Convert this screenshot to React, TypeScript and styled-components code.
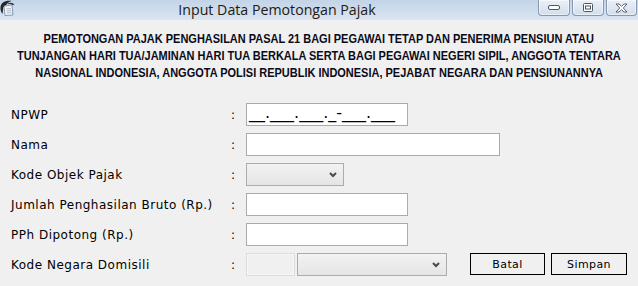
import React from 'react';
import styled, { createGlobalStyle } from 'styled-components';

const GlobalStyle = createGlobalStyle`
  html, body {
    margin: 0;
    padding: 0;
    background: #f0f0f0;
  }
  body {
    width: 638px;
    height: 286px;
    overflow: hidden;
  }
`;

const Window = styled.div`
  width: 638px;
  height: 286px;
  display: flex;
  flex-direction: column;
  background: #f0f0f0;
  font-family: 'DejaVu Sans', Verdana, sans-serif;
`;

const TitleBar = styled.div`
  height: 20px;
  display: flex;
  align-items: flex-start;
  background: linear-gradient(#c3d4e7, #dae5f2);
`;

const AppIcon = styled.div`
  width: 16px;
  height: 16px;
  flex: none;
`;

const Title = styled.div`
  flex: 1;
  text-align: center;
  font-family: 'Open Sans', 'Noto Sans', sans-serif;
  font-size: 14.2px;
  line-height: 19px;
  color: #1e1a12;
`;

const CaptionButtons = styled.div`
  display: flex;
  gap: 2px;
  padding-right: 1px;
`;

const CaptionButton = styled.div<{ $w: number }>`
  width: ${({ $w }) => $w}px;
  height: 16px;
  box-sizing: border-box;
  border: 1px solid #8798b0;
  border-top: none;
  border-radius: 0 0 4px 4px;
  background: linear-gradient(#eaf0f7, #d2deec);
  box-shadow: inset 0 0 0 1px rgba(255, 255, 255, 0.5);
  display: flex;
  align-items: center;
  justify-content: center;
`;

const Content = styled.div`
  flex: 1;
  display: flex;
  flex-direction: column;
  padding-top: 11px;
`;

const Heading = styled.div`
  display: flex;
  flex-direction: column;
  align-items: center;
  font-family: 'Liberation Sans', Arial, sans-serif;
  font-weight: bold;
  font-size: 12px;
  line-height: 17px;
  color: #0b0b18;
`;

const HeadingLine = styled.div`
  white-space: nowrap;
  transform: scaleX(0.915);
  transform-origin: center;
`;

const Form = styled.div`
  margin-top: 21px;
  padding-left: 11px;
  display: grid;
  grid-template-columns: 219px 16px auto;
  grid-auto-rows: 23px;
  row-gap: 7px;
  align-items: center;
  font-size: 12px;
  letter-spacing: 0.5px;
  color: #000;
`;

const Label = styled.div`
  white-space: nowrap;
`;

const Colon = styled.div`
  padding-left: 1px;
`;

const Field = styled.div`
  display: flex;
  align-items: flex-start;
  height: 23px;
  letter-spacing: 0;
`;

const TextBox = styled.div<{ $w: number; $disabled?: boolean }>`
  width: ${({ $w }) => $w}px;
  height: 23px;
  box-sizing: border-box;
  border: 1px solid ${({ $disabled }) => ($disabled ? '#dcdcdc' : '#ababab')};
  background: ${({ $disabled }) => ($disabled ? '#f0f0f0' : '#fff')};
  box-shadow: ${({ $disabled }) => ($disabled ? 'inset 0 0 0 1px #f7f7f7' : 'none')};
  overflow: hidden;
`;

const Mask = styled.div`
  font-size: 16px;
  line-height: 16px;
  padding: 1px 0 0 2px;
  white-space: nowrap;
  color: #000;
`;

const Select = styled.div<{ $w: number }>`
  width: ${({ $w }) => $w}px;
  height: 23px;
  box-sizing: border-box;
  border: 1px solid #acacac;
  background: linear-gradient(#f2f2f2, #e5e5e5);
  display: flex;
  align-items: center;
  justify-content: flex-end;
  padding-right: 6px;
`;

const Spacer = styled.div<{ $w: number }>`
  width: ${({ $w }) => $w}px;
  flex: none;
`;

const Button = styled.div<{ $w: number }>`
  width: ${({ $w }) => $w}px;
  height: 22px;
  box-sizing: border-box;
  border: 1px solid #000;
  background: #f0f0f0;
  display: flex;
  align-items: center;
  justify-content: center;
  font-size: 11px;
  letter-spacing: 0.4px;
  color: #000;
`;

const Chevron = () => (
  <svg width="8" height="6" viewBox="0 0 8 6">
    <path d="M1 1 L4 4 L7 1" fill="none" stroke="#4a4a4a" strokeWidth="2" />
  </svg>
);

const headingLines = [
  'PEMOTONGAN PAJAK PENGHASILAN PASAL 21 BAGI PEGAWAI TETAP DAN PENERIMA PENSIUN ATAU',
  'TUNJANGAN HARI TUA/JAMINAN HARI TUA BERKALA SERTA BAGI PEGAWAI NEGERI SIPIL, ANGGOTA TENTARA',
  'NASIONAL INDONESIA, ANGGOTA POLISI REPUBLIK INDONESIA, PEJABAT NEGARA DAN PENSIUNANNYA',
];

const App: React.FC = () => {
  return (
    <>
      <GlobalStyle />
      <Window>
        <TitleBar>
          <AppIcon>
            <svg width="16" height="16" viewBox="0 0 16 16">
              <path d="M4 6 L12 5 L13 15 L5 15.5 Z" fill="#f2f5fa" stroke="#7d8ea8" strokeWidth="0.9" />
              <path d="M6.5 9 L11 8.6 M6.7 11 L11.2 10.6 M6.9 13 L11.4 12.6" stroke="#9cb0cc" strokeWidth="0.9" />
              <path d="M0.5 7 C1 2.5 5 0 11.5 0.8 C9 2 7.5 3 6.5 4.8 C4.5 5 3 6.5 3 9.5 L2.5 14 C1 12 0.2 9.5 0.5 7 Z" fill="#262626" />
              <path d="M8 3.5 C10.5 2 13 2.5 14.5 4.8 L12.5 5 C11.5 4 10 3.8 8 4.2 Z" fill="#333" />
            </svg>
          </AppIcon>
          <Title>Input Data Pemotongan Pajak</Title>
          <CaptionButtons>
            <CaptionButton $w={32}>
              <svg width="12" height="6" viewBox="0 0 12 6">
                <rect x="0.5" y="0.5" width="11" height="4" rx="1.5" fill="#fff" stroke="#4d5566" />
              </svg>
            </CaptionButton>
            <CaptionButton $w={32}>
              <svg width="10" height="9" viewBox="0 0 10 9">
                <rect x="0.5" y="0.5" width="9" height="8" rx="1" fill="#fff" stroke="#4d5566" />
                <rect x="2.5" y="3" width="5" height="3" fill="#fff" stroke="#4d5566" />
              </svg>
            </CaptionButton>
            <CaptionButton $w={31}>
              <svg width="13" height="10" viewBox="0 0 13 10">
                <path
                  d="M1 1 L4 1 L6.5 3.3 L9 1 L12 1 L8.3 5 L12 9 L9 9 L6.5 6.7 L4 9 L1 9 L4.7 5 Z"
                  fill="#fff"
                  stroke="#4d5566"
                  strokeWidth="0.9"
                  strokeLinejoin="round"
                />
              </svg>
            </CaptionButton>
          </CaptionButtons>
        </TitleBar>
        <Content>
          <Heading>
            {headingLines.map((line, i) => (
              <HeadingLine key={i}>{line}</HeadingLine>
            ))}
          </Heading>
          <Form>
            <Label>NPWP</Label>
            <Colon>:</Colon>
            <Field>
              <TextBox $w={162}>
                <Mask>__.___.___._-___.___</Mask>
              </TextBox>
            </Field>

            <Label>Nama</Label>
            <Colon>:</Colon>
            <Field>
              <TextBox $w={254} />
            </Field>

            <Label>Kode Objek Pajak</Label>
            <Colon>:</Colon>
            <Field>
              <Select $w={98}>
                <Chevron />
              </Select>
            </Field>

            <Label>Jumlah Penghasilan Bruto (Rp.)</Label>
            <Colon>:</Colon>
            <Field>
              <TextBox $w={162} />
            </Field>

            <Label>PPh Dipotong (Rp.)</Label>
            <Colon>:</Colon>
            <Field>
              <TextBox $w={162} />
            </Field>

            <Label>Kode Negara Domisili</Label>
            <Colon>:</Colon>
            <Field>
              <TextBox $w={49} $disabled />
              <Spacer $w={2} />
              <Select $w={150}>
                <Chevron />
              </Select>
              <Spacer $w={23} />
              <Button $w={75}>Batal</Button>
              <Spacer $w={6} />
              <Button $w={76}>Simpan</Button>
            </Field>
          </Form>
        </Content>
      </Window>
    </>
  );
};

export default App;
